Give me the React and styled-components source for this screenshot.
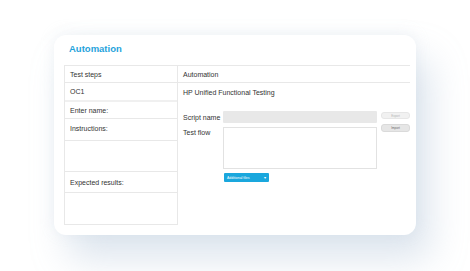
import React from "react";
import styled, { createGlobalStyle } from "styled-components";

const GlobalStyle = createGlobalStyle`
  html, body {
    margin: 0;
    padding: 0;
    background: #ffffff;
  }
  body {
    font-family: "Liberation Sans", Arial, sans-serif;
  }
`;

const Page = styled.div`
  width: 470px;
  height: 271px;
  padding: 35px 0 0 54px;
  box-sizing: border-box;
  overflow: hidden;
`;

const Card = styled.div`
  width: 362px;
  height: 200px;
  box-sizing: border-box;
  background: #ffffff;
  border-radius: 12px;
  padding: 0 6px 10px 10px;
  display: flex;
  flex-direction: column;
  box-shadow: 14px 24px 36px rgba(160, 184, 208, 0.36),
    0 -2px 14px rgba(200, 212, 224, 0.25);
`;

const Title = styled.h1`
  margin: 0;
  height: 31px;
  padding: 0 0 3px 5px;
  display: flex;
  align-items: center;
  font-size: 9.5px;
  font-weight: 700;
  color: #1fa3db;
  box-sizing: border-box;
`;

const Table = styled.div`
  flex: 1;
  display: grid;
  grid-template-columns: 114px 1fr;
  border-top: 1px solid #e8e8e8;
`;

const LeftCol = styled.div`
  display: flex;
  flex-direction: column;
  border-left: 1px solid #e8e8e8;
  border-right: 1px solid #e8e8e8;
  border-bottom: 1px solid #e8e8e8;
`;

const Cell = styled.div`
  height: ${(p) => p.h}px;
  box-sizing: border-box;
  display: flex;
  align-items: ${(p) => (p.top ? "flex-start" : "center")};
  padding: ${(p) => (p.top ? "6px 0 0 5px" : "0 0 0 5px")};
  font-size: 7px;
  color: #333333;
  border-bottom: ${(p) => (p.thick ? "2px solid #f0f0f0" : "1px solid #e8e8e8")};
  &:last-child {
    border-bottom: none;
  }
`;

const RightCol = styled.div`
  display: flex;
  flex-direction: column;
`;

const RightHeader = styled.div`
  height: 17px;
  box-sizing: border-box;
  display: flex;
  align-items: center;
  padding-left: 5px;
  font-size: 7px;
  color: #333333;
  border-bottom: 1px solid #e8e8e8;
`;

const Tool = styled.div`
  padding: 6px 0 0 5px;
  font-size: 7px;
  color: #333333;
`;

const Form = styled.div`
  margin-top: 15px;
  padding-left: 5px;
  display: grid;
  grid-template-columns: 36px 154px 29px;
  column-gap: 4px;
  row-gap: 1px;
  align-items: start;
`;

const Label = styled.div`
  font-size: 7px;
  color: #333333;
  padding-top: ${(p) => p.pt || 0}px;
  white-space: nowrap;
`;

const Input = styled.div`
  height: 12px;
  background: #e8e8e8;
  border-radius: 1px;
`;

const TextArea = styled.div`
  height: 42px;
  box-sizing: border-box;
  border: 1px solid #e2e2e2;
  margin-top: 3px;
`;

const SmallButton = styled.div`
  height: ${(p) => (p.dark ? 8 : 7)}px;
  box-sizing: border-box;
  margin-top: ${(p) => p.mt || 0}px;
  border-radius: 3px;
  background: ${(p) => (p.dark ? "#e6e6e6" : "#f1f1f1")};
  border: 1px solid ${(p) => (p.dark ? "#dadada" : "#e6e6e6")};
  color: ${(p) => (p.dark ? "#666" : "#b5b5b5")};
  font-size: 3px;
  display: flex;
  align-items: center;
  justify-content: center;
`;

const DropButton = styled.div`
  grid-column: 2;
  margin-top: 3px;
  margin-left: 1px;
  width: 45px;
  height: 9px;
  box-sizing: border-box;
  background: #1aa7dd;
  border-radius: 1px;
  color: #ffffff;
  font-size: 3.5px;
  display: flex;
  align-items: center;
  justify-content: space-between;
  padding: 0 3px 0 3px;
`;

const Caret = styled.span`
  font-size: 4px;
`;

export default function App() {
  return (
    <>
      <GlobalStyle />
      <Page>
        <Card>
          <Title>Automation</Title>
          <Table>
            <LeftCol>
              <Cell h={17}>Test steps</Cell>
              <Cell h={19} thick>OC1</Cell>
              <Cell h={17}>Enter name:</Cell>
              <Cell h={22} top>Instructions:</Cell>
              <Cell h={31} />
              <Cell h={21}>Expected results:</Cell>
              <Cell h={31} />
            </LeftCol>
            <RightCol>
              <RightHeader>Automation</RightHeader>
              <Tool>HP Unified Functional Testing</Tool>
              <Form>
                <Label pt={3}>Script name</Label>
                <Input />
                <SmallButton mt={1}>Export</SmallButton>
                <Label pt={5}>Test flow</Label>
                <TextArea />
                <SmallButton dark>Import</SmallButton>
                <DropButton>
                  <span>Additional files</span>
                  <Caret>▾</Caret>
                </DropButton>
              </Form>
            </RightCol>
          </Table>
        </Card>
      </Page>
    </>
  );
}
